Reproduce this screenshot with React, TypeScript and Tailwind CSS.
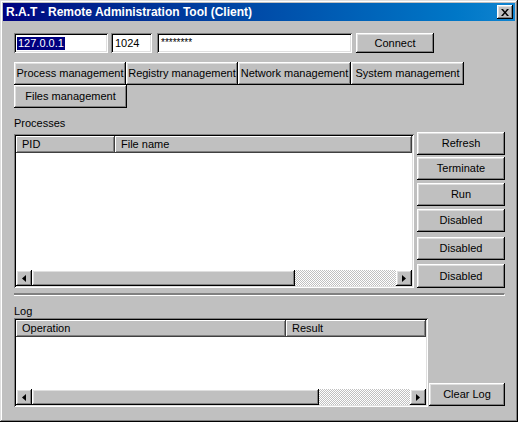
const font = "font-['Liberation_Sans',Arial,sans-serif]"
const raised =
  "bg-[#c0c0c0] shadow-[inset_-1px_-1px_#000,inset_1px_1px_#fff,inset_-2px_-2px_#808080,inset_2px_2px_#dfdfdf]"
const sunken =
  "bg-white shadow-[inset_1px_1px_#808080,inset_-1px_-1px_#fff,inset_2px_2px_#000,inset_-2px_-2px_#dfdfdf]"
const checker =
  "bg-[repeating-conic-gradient(#c0c0c0_0%_25%,#ffffff_0%_50%)] bg-[length:2px_2px]"

function Button({ label, className = "" }: { label: string; className?: string }) {
  return (
    <div className={`${raised} flex items-center justify-center ${className}`}>
      <span className="leading-[13px]">{label}</span>
    </div>
  )
}

function Arrow({ dir }: { dir: "left" | "right" }) {
  return (
    <div className={`${raised} w-[16px] h-[16px] flex items-center justify-center shrink-0`}>
      <svg width="4" height="7" viewBox="0 0 4 7">
        {dir === "left" ? (
          <polygon points="4,0 4,7 0,3.5" fill="#000" />
        ) : (
          <polygon points="0,0 0,7 4,3.5" fill="#000" />
        )}
      </svg>
    </div>
  )
}

function ScrollBar({ thumb }: { thumb: number }) {
  return (
    <div className="flex h-[16px] shrink-0">
      <Arrow dir="left" />
      <div className={`${raised} h-[16px] shrink-0`} style={{ width: thumb }} />
      <div className={`flex-1 ${checker}`} />
      <Arrow dir="right" />
    </div>
  )
}

type Col = { label: string; width?: number }

function ListView({ cols, thumb, className }: { cols: Col[]; thumb: number; className: string }) {
  return (
    <div className={`${sunken} p-[2px] flex flex-col ${className}`}>
      <div className="flex h-[17px] shrink-0">
        {cols.map((c) => (
          <div
            key={c.label}
            className={`bg-[#c0c0c0] shadow-[inset_-1px_-1px_#404040,inset_1px_1px_#fff,inset_-2px_-2px_#808080] flex items-center pl-[6px] ${c.width ? "shrink-0" : "flex-1"}`}
            style={c.width ? { width: c.width } : undefined}
          >
            <span className="leading-[13px]">{c.label}</span>
          </div>
        ))}
      </div>
      <div className="flex-1 bg-white" />
      <ScrollBar thumb={thumb} />
    </div>
  )
}

export default function App() {
  return (
    <div
      className={`${font} text-[11px] text-black w-[518px] h-[422px] bg-[#c0c0c0] p-[3px] flex flex-col shadow-[inset_-1px_-1px_#000,inset_1px_1px_#dfdfdf,inset_-2px_-2px_#808080,inset_2px_2px_#fff]`}
    >
      {/* Title bar */}
      <div className="h-[18px] shrink-0 bg-linear-to-r from-[#000080] to-[#1084d0] flex items-center justify-between pl-[3px] pr-[2px]">
        <span className="text-white font-bold text-[12px] leading-[14px]">
          R.A.T - Remote Administration Tool (Client)
        </span>
        <div className={`${raised} w-[16px] h-[14px] flex items-center justify-center`}>
          <svg width="8" height="7" viewBox="0 0 8 7">
            <path d="M0 0h2l2 2.5L6 0h2L5 3.5 8 7H6L4 4.5 2 7H0l3-3.5z" fill="#000" />
          </svg>
        </div>
      </div>

      <div className="pl-[11px] pr-[10px] flex flex-col">
        {/* Connection row */}
        <div className="flex mt-[12px] h-[20px]">
          <div className={`${sunken} w-[94px] flex items-center pl-[3px]`}>
            <span className="bg-[#000080] text-white leading-[13px] px-[1px]">127.0.0.1</span>
          </div>
          <div className={`${sunken} w-[41px] ml-[3px] flex items-center pl-[4px]`}>
            <span className="leading-[13px]">1024</span>
          </div>
          <div className={`${sunken} w-[195px] ml-[5px] pl-[4px] pt-[4px]`}>
            <span className="leading-[11px] text-[10px] block">********</span>
          </div>
          <Button label="Connect" className="w-[78px] ml-[4px]" />
        </div>

        {/* Tabs */}
        <div className="flex mt-[9px] h-[23px]">
          <Button label="Process management" className="w-[112px]" />
          <Button label="Registry management" className="w-[112px]" />
          <Button label="Network management" className="w-[113px]" />
          <Button label="System management" className="w-[113px]" />
        </div>
        <div className="flex h-[23px]">
          <Button label="Files management" className="w-[113px]" />
        </div>

        {/* Processes */}
        <div className="mt-[9px] leading-[13px]">Processes</div>
        <div className="flex mt-[2px]">
          <ListView
            className="w-[400px] h-[154px] mt-[2px]"
            cols={[{ label: "PID", width: 99 }, { label: "File name" }]}
            thumb={263}
          />
          <div className="ml-[3px] w-[88px] flex flex-col">
            <Button label="Refresh" className="h-[23px]" />
            <Button label="Terminate" className="h-[23px] mt-[2px]" />
            <Button label="Run" className="h-[23px] mt-[3px]" />
            <Button label="Disabled" className="h-[23px] mt-[3px]" />
            <Button label="Disabled" className="h-[23px] mt-[5px]" />
            <Button label="Disabled" className="h-[24px] mt-[4px]" />
          </div>
        </div>

        {/* Separator */}
        <div className="mt-[5px] h-[3px] border-t-2 border-t-[#808080] border-b border-b-white border-r border-r-white" />

        {/* Log */}
        <div className="mt-[9px] leading-[13px]">Log</div>
        <div className="flex items-end">
          <ListView
            className="w-[414px] h-[89px]"
            cols={[{ label: "Operation", width: 270 }, { label: "Result" }]}
            thumb={287}
          />
          <Button label="Clear Log" className="w-[76px] h-[23px] ml-[1px] mb-[1px]" />
        </div>
      </div>
    </div>
  )
}
